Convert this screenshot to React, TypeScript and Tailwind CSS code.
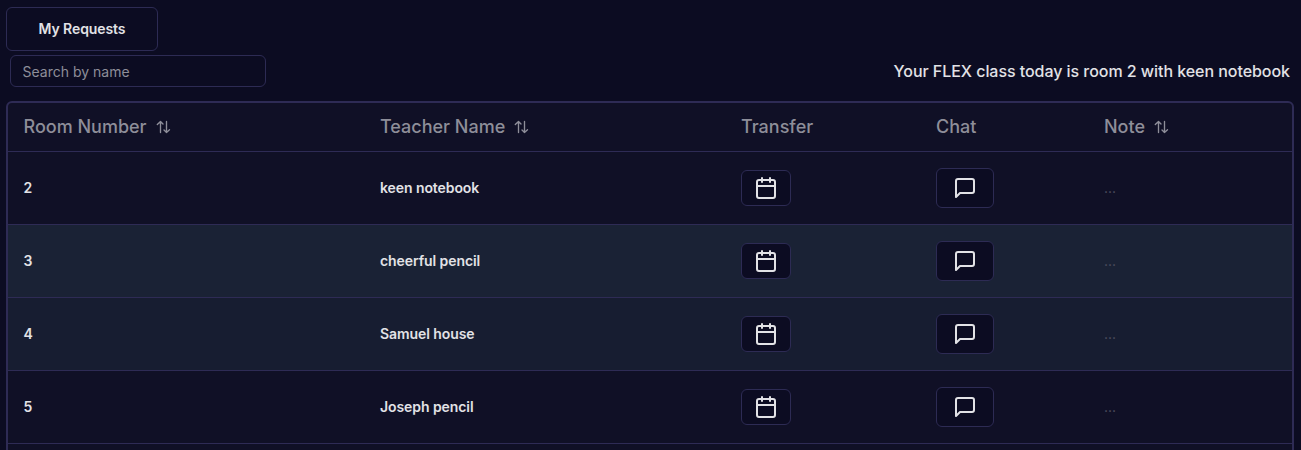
import { Calendar } from "lucide-react";

const rows = [
  { room: "2", teacher: "keen notebook", bg: "bg-[#101026]" },
  { room: "3", teacher: "cheerful pencil", bg: "bg-[#1a2235]" },
  { room: "4", teacher: "Samuel house", bg: "bg-[#171d31]" },
  { room: "5", teacher: "Joseph pencil", bg: "bg-[#101026]" },
];

const columns = "grid grid-cols-[356.5px_361px_195px_168px_1fr]";

function SortIcon() {
  return (
    <svg className="ml-2 size-4" viewBox="0 0 16 16" fill="none" stroke="currentColor" strokeWidth="1.35" strokeLinecap="round" strokeLinejoin="round">
      <path d="M5.5 13.5V2.7M2.3 5.5 5.5 2.5l2.5 2.5M11.5 2.5v11M9 11l2.5 2.5 3-2.7" />
    </svg>
  );
}

function ChatIcon() {
  return (
    <svg className="size-6" viewBox="0 0 24 24" fill="none" stroke="currentColor" strokeWidth="2" strokeLinecap="round" strokeLinejoin="round">
      <path d="M21 15a2 2 0 0 1-2 2H7l-4 4V5a2 2 0 0 1 2-2h14a2 2 0 0 1 2 2z" />
    </svg>
  );
}

function Heading({ label, sortable = false }: { label: string; sortable?: boolean }) {
  return (
    <div className="flex items-center px-[15.5px] text-lg font-medium text-[#8e8e99]">
      {label}
      {sortable && <SortIcon />}
    </div>
  );
}

export default function App() {
  return (
    <div className="h-[450px] overflow-hidden bg-[#0c0c22] px-1.5 pt-[7px] font-['Inter',sans-serif] text-[#e2e2e6]">
      <button className="flex h-11 w-[152px] items-center justify-center rounded-md border border-[#2d2b54] text-sm font-semibold tracking-[-0.08px]">
        My Requests
      </button>
      <div className="mt-1 flex h-8 items-center justify-between pr-[5px] pl-1">
        <input
          className="h-8 w-64 rounded-md border border-[#2d2b54] bg-transparent px-[11.5px] text-sm outline-none placeholder:text-[#8e8e99]"
          placeholder="Search by name"
        />
        <p className="text-base font-medium tracking-[-0.05px]">Your FLEX class today is room 2 with keen notebook</p>
      </div>
      <div className="mt-3.5 mr-[1px] h-[500px] overflow-hidden rounded-md border-2 border-[#2e2b55] bg-[#101026]">
        <div className={`${columns} h-[49px] border-b border-[#2e2b55]`}>
          <Heading label="Room Number" sortable />
          <Heading label="Teacher Name" sortable />
          <Heading label="Transfer" />
          <Heading label="Chat" />
          <Heading label="Note" sortable />
        </div>
        {rows.map((row) => (
          <div key={row.room} className={`${columns} h-[73px] items-center border-b border-[#2e2b55] text-sm font-semibold tracking-[-0.08px] ${row.bg}`}>
            <div className="px-[15.5px]">{row.room}</div>
            <div className="px-[15.5px]">{row.teacher}</div>
            <div className="px-[15.5px]">
              <button className="flex h-9 w-[50px] items-center justify-center rounded-md border border-[#2d2b54] bg-[#0c0c22]">
                <Calendar className="size-6" />
              </button>
            </div>
            <div className="px-[15.5px]">
              <button className="flex h-10 w-[58px] items-center justify-center rounded-md border border-[#2d2b54] bg-[#0c0c22]">
                <ChatIcon />
              </button>
            </div>
            <div className="px-[15.5px] font-normal text-[#4f4f60]">...</div>
          </div>
        ))}
      </div>
    </div>
  );
}
